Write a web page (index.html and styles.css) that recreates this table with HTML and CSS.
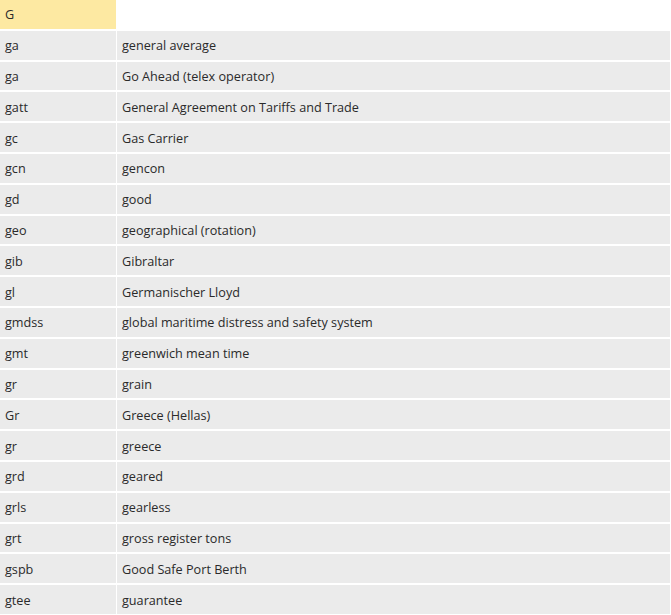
FILE: index.html
```html
<!DOCTYPE html>
<html>
<head>
<meta charset="utf-8">
<link rel="stylesheet" href="styles.css">
</head>
<body>
<table class="abbr">
  <thead>
    <tr><th class="letter">G</th><th class="blank"></th></tr>
  </thead>
  <tbody>
    <tr><td>ga</td><td>general average</td></tr>
    <tr><td>ga</td><td>Go Ahead (telex operator)</td></tr>
    <tr><td>gatt</td><td>General Agreement on Tariffs and Trade</td></tr>
    <tr><td>gc</td><td>Gas Carrier</td></tr>
    <tr><td>gcn</td><td>gencon</td></tr>
    <tr><td>gd</td><td>good</td></tr>
    <tr><td>geo</td><td>geographical (rotation)</td></tr>
    <tr><td>gib</td><td>Gibraltar</td></tr>
    <tr><td>gl</td><td>Germanischer Lloyd</td></tr>
    <tr><td>gmdss</td><td>global maritime distress and safety system</td></tr>
    <tr><td>gmt</td><td>greenwich mean time</td></tr>
    <tr><td>gr</td><td>grain</td></tr>
    <tr><td>Gr</td><td>Greece (Hellas)</td></tr>
    <tr><td>gr</td><td>greece</td></tr>
    <tr><td>grd</td><td>geared</td></tr>
    <tr><td>grls</td><td>gearless</td></tr>
    <tr><td>grt</td><td>gross register tons</td></tr>
    <tr><td>gspb</td><td>Good Safe Port Berth</td></tr>
    <tr><td>gtee</td><td>guarantee</td></tr>
  </tbody>
</table>
</body>
</html>
```
FILE: styles.css
```css
html, body {
  margin: 0;
  padding: 0;
  background: #ffffff;
}
.abbr {
  width: 672px;
  border-collapse: separate;
  border-spacing: 1px 2px;
  margin: -2px 0 0 -1px;
  font-family: "Open Sans", "DejaVu Sans", sans-serif;
  font-size: 12.65px;
  color: #2a2a2a;
  table-layout: fixed;
}
.abbr th, .abbr td {
  text-align: left;
  font-weight: normal;
  padding: 0 5px;
  height: 28.8px;
  box-sizing: border-box;
  vertical-align: middle;
  white-space: nowrap;
}
.abbr th.letter {
  width: 116px;
  background: #fde9a2;
}
.abbr th.blank {
  background: #ffffff;
}
.abbr td {
  background: #ebebeb;
}
```
